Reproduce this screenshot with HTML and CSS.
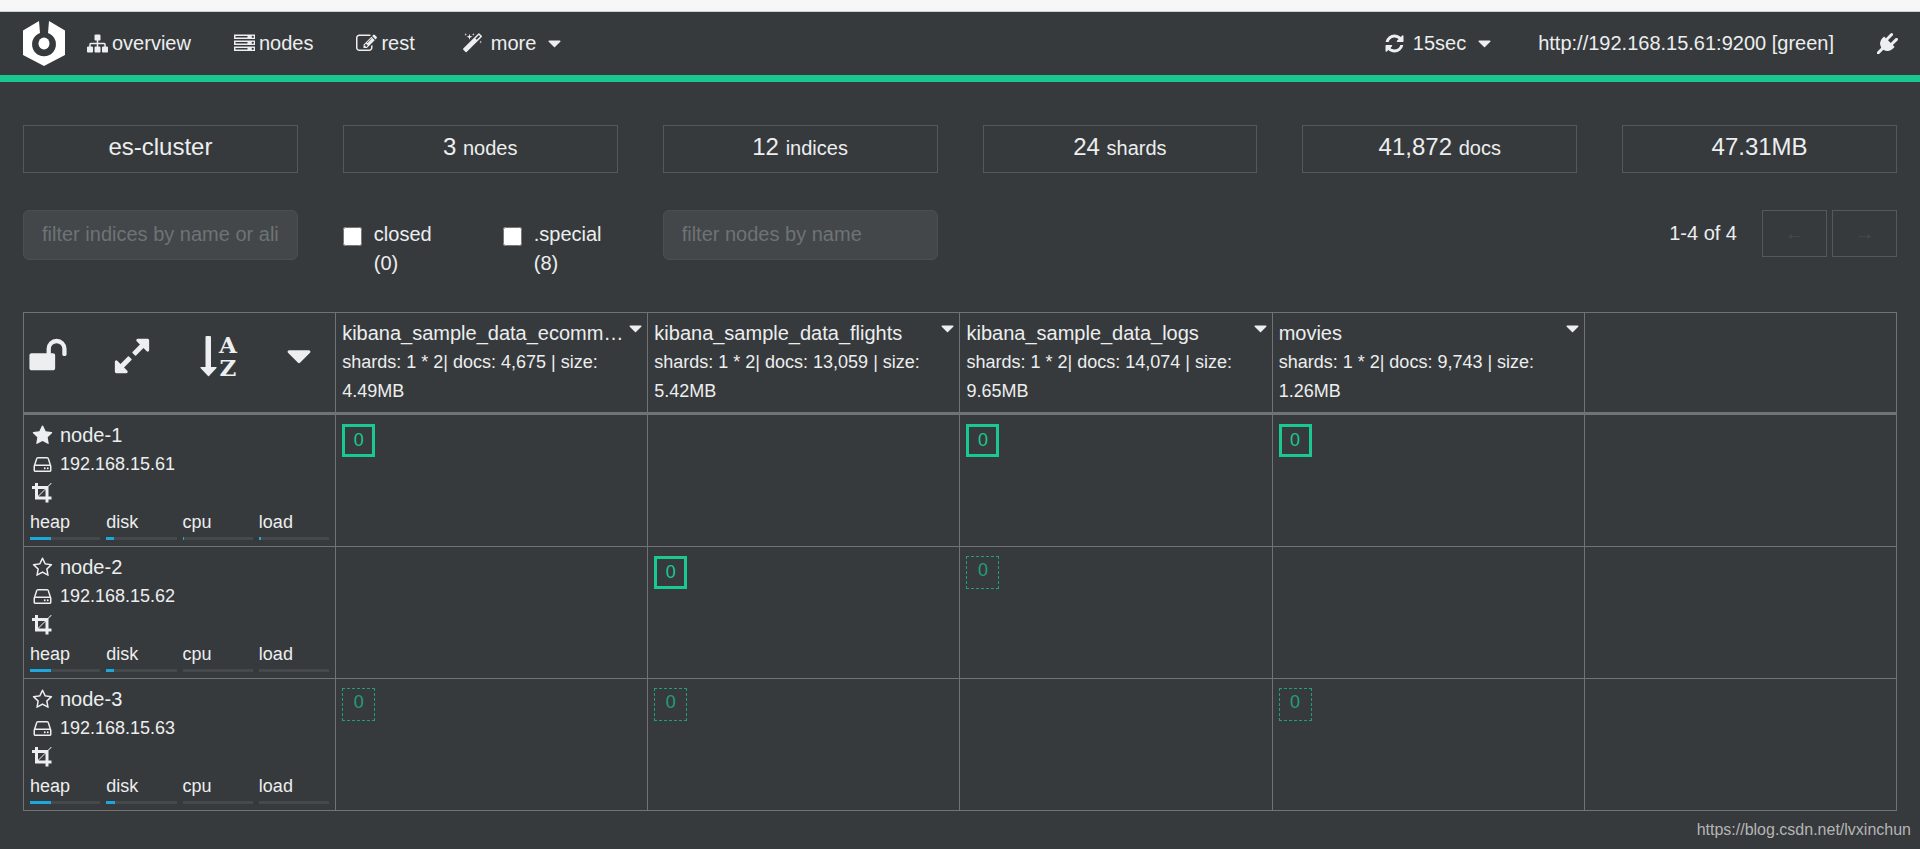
FILE: index.html
```html
<!DOCTYPE html>
<html lang="en">
<head>
<meta charset="utf-8">
<title>cerebro - es-cluster</title>
<meta name="viewport" content="width=device-width, initial-scale=1">
<link rel="stylesheet" href="styles.css">
</head>
<body>
<svg class="sprite" aria-hidden="true">
  <symbol id="caret" viewBox="0 0 1792 1792"><path d="M1408 704q0 26-19 45l-448 448q-19 19-45 19t-45-19l-448-448q-19-19-19-45t19-45 45-19h896q26 0 45 19t19 45z"/></symbol>
  <symbol id="sitemap" viewBox="0 0 1792 1792"><path d="M1792 1248v320q0 40-28 68t-68 28h-320q-40 0-68-28t-28-68v-320q0-40 28-68t68-28h96v-192h-512v192h96q40 0 68 28t28 68v320q0 40-28 68t-68 28h-320q-40 0-68-28t-28-68v-320q0-40 28-68t68-28h96v-192h-512v192h96q40 0 68 28t28 68v320q0 40-28 68t-68 28h-320q-40 0-68-28t-28-68v-320q0-40 28-68t68-28h96v-192q0-52 38-90t90-38h512v-192h-96q-40 0-68-28t-28-68v-320q0-40 28-68t68-28h320q40 0 68 28t28 68v320q0 40-28 68t-68 28h-96v192h512q52 0 90 38t38 90v192h96q40 0 68 28t28 68z"/></symbol>
  <symbol id="server" viewBox="0 0 1792 1792"><path d="M128 1408h1024v-128h-1024v128zm0-512h1024v-128h-1024v128zm1568 448q0-40-28-68t-68-28-68 28-28 68 28 68 68 28 68-28 28-68zm-1568-960h1024v-128h-1024v128zm1568 448q0-40-28-68t-68-28-68 28-28 68 28 68 68 28 68-28 28-68zm0-512q0-40-28-68t-68-28-68 28-28 68 28 68 68 28 68-28 28-68zm96 832v384h-1792v-384h1792zm0-512v384h-1792v-384h1792zm0-512v384h-1792v-384h1792z"/></symbol>
  <symbol id="edit" viewBox="0 0 1792 1792"><path d="M888 1184l116-116-152-152-116 116v56h96v96h56zm440-720q-16-16-33 1l-350 350q-17 17-1 33t33-1l350-350q17-17 1-33zm80 594v190q0 119-84.500 203.500t-203.500 84.500h-832q-119 0-203.500-84.500t-84.500-203.500v-832q0-119 84.500-203.500t203.500-84.500h832q63 0 117 25 15 7 18 23 3 17-9 29l-49 49q-14 14-32 8-23-6-45-6h-832q-66 0-113 47t-47 113v832q0 66 47 113t113 47h832q66 0 113-47t47-113v-126q0-13 9-22l64-64q15-15 35-7t20 29zm-96-738l288 288-672 672h-288v-288zm444 132l-92 92-288-288 92-92q28-28 68-28t68 28l152 152q28 28 28 68t-28 68z"/></symbol>
  <symbol id="magic" viewBox="0 0 1792 1792"><path d="M1254 581l293-293-107-107-293 293zm447-293q0 27-18 45l-1286 1286q-18 18-45 18t-45-18l-198-198q-18-18-18-45t18-45l1286-1286q18-18 45-18t45 18l198 198q18 18 18 45zm-1351-190l98 30-98 30-30 98-30-98-98-30 98-30 30-98zm350 162l196 60-196 60-60 196-60-196-196-60 196-60 60-196zm930 478l98 30-98 30-30 98-30-98-98-30 98-30 30-98zm-640-640l98 30-98 30-30 98-30-98-98-30 98-30 30-98z"/></symbol>
  <symbol id="refresh" viewBox="0 0 1792 1792"><path d="M1639 1056q0 5-1 7-64 268-268 434.500t-478 166.500q-146 0-282.500-55t-243.500-157l-129 129q-19 19-45 19t-45-19-19-45v-448q0-26 19-45t45-19h448q26 0 45 19t19 45-19 45l-137 137q71 66 161 102t187 36q134 0 250-65t186-179q11-17 53-117 8-23 30-23h192q13 0 22.500 9.500t9.500 22.500zm25-800v448q0 26-19 45t-45 19h-448q-26 0-45-19t-19-45 19-45l138-138q-148-137-349-137-134 0-250 65t-186 179q-11 17-53 117-8 23-30 23h-199q-13 0-22.500-9.500t-9.500-22.500v-7q65-268 270-434.500t480-166.500q146 0 284 55.500t245 156.500l130-129q19-19 45-19t45 19 19 45z"/></symbol>
  <symbol id="plug" viewBox="0 0 1792 1792"><path d="M1755 453q37 38 37 90.500t-37 90.500l-401 400 150 150-160 160q-163 163-389.500 186.500t-411.500-100.500l-362 362h-181v-181l362-362q-124-185-100.500-411.500t186.500-389.500l160-160 150 150 400-401q38-37 91-37t90 37 37 90.500-37 90.500l-400 401 234 234 401-400q38-37 91-37t90 37z"/></symbol>
  <symbol id="star" viewBox="0 0 1792 1792"><path d="M1728 647q0 22-26 48l-363 354 86 500q1 7 1 20 0 21-10.500 35.500t-30.500 14.500q-19 0-40-12l-449-236-449 236q-22 12-40 12-21 0-31.500-14.500t-10.500-35.500q0-6 2-20l86-500-364-354q-25-27-25-48 0-37 56-46l502-73 225-455q19-41 49-41t49 41l225 455 502 73q56 9 56 46z"/></symbol>
  <symbol id="star-o" viewBox="0 0 1792 1792"><path d="M1201 1004l306-297-422-62-189-382-189 382-422 62 306 297-73 421 378-199 377 199zm527-357q0 22-26 48l-363 354 86 500q1 7 1 20 0 50-41 50-19 0-40-12l-449-236-449 236q-22 12-40 12-21 0-31.500-14.500t-10.500-35.500q0-6 2-20l86-500-364-354q-25-27-25-48 0-37 56-46l502-73 225-455q19-41 49-41t49 41l225 455 502 73q56 9 56 46z"/></symbol>
  <symbol id="hdd" viewBox="0 0 1792 1792"><path d="M1168 1216q0 33-23.500 56.500t-56.500 23.500-56.500-23.500-23.500-56.500 23.500-56.500 56.500-23.500 56.500 23.500 23.500 56.500zm256 0q0 33-23.500 56.500t-56.500 23.500-56.500-23.500-23.500-56.500 23.500-56.500 56.500-23.500 56.500 23.500 23.500 56.500zm112 160v-320q0-13-9.500-22.500t-22.500-9.500h-1216q-13 0-22.500 9.500t-9.500 22.500v320q0 13 9.500 22.500t22.500 9.500h1216q13 0 22.500-9.500t9.500-22.500zm-1230-480h1180l-157-482q-4-13-16-21.500t-26-8.500h-782q-14 0-26 8.500t-16 21.500zm1358 160v320q0 66-47 113t-113 47h-1216q-66 0-113-47t-47-113v-320q0-25 16-75l197-606q17-53 63-86t101-33h782q55 0 101 33t63 86l197 606q16 50 16 75z"/></symbol>
  <symbol id="crop" viewBox="0 0 1792 1792"><path d="M557 1152h595v-595zm-45-45l595-595h-595v595zm1152 77v192q0 14-9 23t-23 9h-224v224q0 14-9 23t-23 9h-192q-14 0-23-9t-9-23v-224h-864q-14 0-23-9t-9-23v-864h-224q-14 0-23-9t-9-23v-192q0-14 9-23t23-9h224v-224q0-14 9-23t23-9h192q14 0 23 9t9 23v224h851l246-247q10-9 23-9t23 9q9 10 9 23t-9 23l-247 246v851h224q14 0 23 9t9 23z"/></symbol>
  <symbol id="unlock" viewBox="0 0 1792 1792"><path d="M1728 576v256q0 26-19 45t-45 19h-64q-26 0-45-19t-19-45v-256q0-106-75-181t-181-75-181 75-75 181v192h96q40 0 68 28t28 68v576q0 40-28 68t-68 28h-960q-40 0-68-28t-28-68v-576q0-40 28-68t68-28h672v-192q0-185 131.500-316.500t316.500-131.500 316.500 131.500 131.500 316.500z"/></symbol>
  <symbol id="expand" viewBox="0 0 1792 1792"><path d="M883 1056q0 13-10 23l-332 332 144 144q19 19 19 45t-19 45-45 19h-448q-26 0-45-19t-19-45v-448q0-26 19-45t45-19 45 19l144 144 332-332q10-10 23-10t23 10l114 114q10 10 10 23zm781-864v448q0 26-19 45t-45 19-45-19l-144-144-332 332q-10 10-23 10t-23-10l-114-114q-10-10-10-23t10-23l332-332-144-144q-19-19-19-45t19-45 45-19h448q26 0 45 19t19 45z"/></symbol>
</svg>

<div class="window-edge"></div>

<nav class="navbar" aria-label="Main">
  <a class="logo" href="#" aria-label="cerebro">
    <svg viewBox="0 0 42 45"><path d="M16 0 L17 12 A12 12 0 1 0 25 12 L26 0 L42 9.500 V34 L21 45 L0 34 V9.500 Z"/><ellipse cx="21" cy="22.500" rx="5.500" ry="6"/></svg>
  </a>
  <a class="nav-link" href="#"><svg class="icon"><use href="#sitemap"/></svg>overview</a>
  <a class="nav-link" href="#"><svg class="icon"><use href="#server"/></svg>nodes</a>
  <a class="nav-link" href="#"><svg class="icon"><use href="#edit"/></svg>rest</a>
  <button class="nav-link nav-menu" type="button"><svg class="icon"><use href="#magic"/></svg>more<svg class="icon"><use href="#caret"/></svg></button>
  <button class="nav-link nav-menu nav-right" type="button"><svg class="icon"><use href="#refresh"/></svg>15sec<svg class="icon"><use href="#caret"/></svg></button>
  <a class="nav-link" href="#">http://192.168.15.61:9200 [green]</a>
  <button class="nav-link" type="button" aria-label="disconnect"><svg class="icon"><use href="#plug"/></svg></button>
</nav>

<main class="page">
  <section class="columns stats" aria-label="Cluster">
    <div class="stat">es-cluster</div>
    <div class="stat">3 <small>nodes</small></div>
    <div class="stat">12 <small>indices</small></div>
    <div class="stat">24 <small>shards</small></div>
    <div class="stat">41,872 <small>docs</small></div>
    <div class="stat">47.31MB</div>
  </section>

  <form class="columns filters">
    <input class="filter" type="text" placeholder="filter indices by name or aliases" aria-label="filter indices by name or aliases">
    <div class="checks">
      <label class="check"><input type="checkbox"><span>closed (0)</span></label>
      <label class="check"><input type="checkbox"><span>.special (8)</span></label>
    </div>
    <input class="filter" type="text" placeholder="filter nodes by name" aria-label="filter nodes by name">
    <div class="pager">
      <span class="pager-text">1-4 of 4</span>
      <button class="pager-button" type="button" disabled aria-label="previous">←</button>
      <button class="pager-button" type="button" disabled aria-label="next">→</button>
    </div>
  </form>

  <table class="shards">
    <thead>
      <tr>
        <th>
          <div class="tools">
            <button class="tool" type="button" aria-label="unlock"><svg><use href="#unlock"/></svg></button>
            <button class="tool" type="button" aria-label="expand"><svg><use href="#expand"/></svg></button>
            <button class="tool" type="button" aria-label="sort"><svg viewBox="0 0 40 40"><path d="M11 0h4q1 0 1 1v30h5q1 0 .500 1l-7.500 8q-.500.500-1 0l-7.500-8q-.500-1 .500-1h4.500v-30q0-1 1-1z"/><text class="tool-letter" x="33" y="17">A</text><text class="tool-letter" x="33" y="40">Z</text></svg></button>
            <button class="tool" type="button" aria-label="options"><svg><use href="#caret"/></svg></button>
          </div>
        </th>
        <th>
          <div class="index-head"><span class="index-name">kibana_sample_data_ecommerce</span><button class="index-menu" type="button" aria-label="index menu"><svg class="icon"><use href="#caret"/></svg></button></div>
          <div class="index-info">shards: 1 * 2| docs: 4,675 | size: 4.49MB</div>
        </th>
        <th>
          <div class="index-head"><span class="index-name">kibana_sample_data_flights</span><button class="index-menu" type="button" aria-label="index menu"><svg class="icon"><use href="#caret"/></svg></button></div>
          <div class="index-info">shards: 1 * 2| docs: 13,059 | size: 5.42MB</div>
        </th>
        <th>
          <div class="index-head"><span class="index-name">kibana_sample_data_logs</span><button class="index-menu" type="button" aria-label="index menu"><svg class="icon"><use href="#caret"/></svg></button></div>
          <div class="index-info">shards: 1 * 2| docs: 14,074 | size: 9.65MB</div>
        </th>
        <th>
          <div class="index-head"><span class="index-name">movies</span><button class="index-menu" type="button" aria-label="index menu"><svg class="icon"><use href="#caret"/></svg></button></div>
          <div class="index-info">shards: 1 * 2| docs: 9,743 | size: 1.26MB</div>
        </th>
        <th></th>
      </tr>
    </thead>
    <tbody>
      <tr>
        <td>
          <div class="node-line node-name"><svg class="node-icon"><use href="#star"/></svg>node-1</div>
          <div class="node-line"><svg class="node-icon"><use href="#hdd"/></svg>192.168.15.61</div>
          <div class="node-line"><svg class="node-icon"><use href="#crop"/></svg></div>
          <div class="gauges">
            <div>heap<div class="bar"><div class="bar-fill" style="width:30%"></div></div></div>
            <div>disk<div class="bar"><div class="bar-fill" style="width:11%"></div></div></div>
            <div>cpu<div class="bar"><div class="bar-fill" style="width:2%"></div></div></div>
            <div>load<div class="bar"><div class="bar-fill" style="width:3%"></div></div></div>
          </div>
        </td>
        <td><span class="shard primary">0</span></td>
        <td></td>
        <td><span class="shard primary">0</span></td>
        <td><span class="shard primary">0</span></td>
        <td></td>
      </tr>
      <tr>
        <td>
          <div class="node-line node-name"><svg class="node-icon"><use href="#star-o"/></svg>node-2</div>
          <div class="node-line"><svg class="node-icon"><use href="#hdd"/></svg>192.168.15.62</div>
          <div class="node-line"><svg class="node-icon"><use href="#crop"/></svg></div>
          <div class="gauges">
            <div>heap<div class="bar"><div class="bar-fill" style="width:30%"></div></div></div>
            <div>disk<div class="bar"><div class="bar-fill" style="width:11%"></div></div></div>
            <div>cpu<div class="bar"></div></div>
            <div>load<div class="bar"></div></div>
          </div>
        </td>
        <td></td>
        <td><span class="shard primary">0</span></td>
        <td><span class="shard replica">0</span></td>
        <td></td>
        <td></td>
      </tr>
      <tr>
        <td>
          <div class="node-line node-name"><svg class="node-icon"><use href="#star-o"/></svg>node-3</div>
          <div class="node-line"><svg class="node-icon"><use href="#hdd"/></svg>192.168.15.63</div>
          <div class="node-line"><svg class="node-icon"><use href="#crop"/></svg></div>
          <div class="gauges">
            <div>heap<div class="bar"><div class="bar-fill" style="width:30%"></div></div></div>
            <div>disk<div class="bar"><div class="bar-fill" style="width:13%"></div></div></div>
            <div>cpu<div class="bar"></div></div>
            <div>load<div class="bar"></div></div>
          </div>
        </td>
        <td><span class="shard replica">0</span></td>
        <td><span class="shard replica">0</span></td>
        <td></td>
        <td><span class="shard replica">0</span></td>
        <td></td>
      </tr>
    </tbody>
  </table>
</main>

<footer class="source">https://blog.csdn.net/lvxinchun</footer>
</body>
</html>
```

FILE: styles.css
```css
* { box-sizing: border-box; }

body {
  margin: 0;
  background: #373a3c;
  color: #eceeef;
  font-family: "Liberation Sans", Arial, sans-serif;
  font-size: 20px;
  line-height: 29px;
}

button, input { font: inherit; color: inherit; }
button { border: 0; padding: 0; background: none; }
svg { display: block; fill: currentColor; }

.sprite { display: none; }
.icon { width: 21px; height: 21px; flex: none; }

.window-edge {
  height: 12px;
  background: #f7f7f7;
  border-bottom: 1px solid #cfcfcf;
}

/* Navigation */
.navbar {
  display: flex;
  align-items: center;
  gap: 43px;
  height: 70px;
  padding: 0 22px 0 23px;
  border-bottom: 7px solid #1ac98e;
}
.logo { margin-right: -21px; color: #fff; }
.logo svg { width: 42px; height: 45px; }
.nav-link {
  display: flex;
  align-items: center;
  gap: 4px;
  color: inherit;
  text-decoration: none;
}
.nav-menu { gap: 8px; margin-left: 4px; }
.nav-right { margin-left: auto; }

/* Content */
.page { padding: 43px 23px 0; }
.columns {
  display: grid;
  grid-template-columns: repeat(6, minmax(0, 1fr));
  gap: 45px;
}
.stat {
  padding: 1px 0 5px;
  border: 1px solid #55595c;
  font-size: 24px;
  line-height: 40px;
  text-align: center;
}
.stat small { font-size: 20px; line-height: 20px; }

.filters { align-items: start; margin: 37px 0 34px; }
.filter {
  width: 100%;
  height: 50px;
  padding: 0 18px 2px;
  border: 1px solid #4b4f51;
  border-radius: 6px;
  background: #434749;
}
.filter::placeholder { color: #6e7376; opacity: 1; }

.checks {
  display: grid;
  grid-template-columns: 1fr 1fr;
  gap: 45px;
  padding-top: 10px;
}
.check { display: flex; gap: 12px; }
.check input { flex: none; width: 19px; height: 19px; margin: 7px 0 0; }

.pager {
  grid-column: span 3;
  display: flex;
  justify-content: flex-end;
  align-items: center;
  gap: 5px;
}
.pager-text { margin-right: 20px; }
.pager-button {
  width: 65px;
  height: 47px;
  border: 1px solid #55595c;
  color: #46494c;
}

/* Shard table */
.shards {
  width: 100%;
  table-layout: fixed;
  border-collapse: separate;
  border-spacing: 0;
  border-top: 1px solid #6f7376;
  border-left: 1px solid #6f7376;
  font-size: 18px;
}
.shards th, .shards td {
  padding: 6px;
  border-right: 1px solid #6f7376;
  border-bottom: 1px solid #6f7376;
  font-weight: normal;
  text-align: left;
  vertical-align: top;
}
.shards th { border-bottom-width: 3px; }

.tools {
  display: flex;
  justify-content: space-between;
  margin-left: -2px;
  padding: 17px 10px 0 0;
}
.tool svg { width: 40px; height: 40px; overflow: visible; }
.tool-letter {
  font: bold 23px "DejaVu Serif", serif;
  text-anchor: middle;
}

.index-head {
  display: flex;
  justify-content: space-between;
  font-size: 20px;
}
.index-name {
  overflow: hidden;
  text-overflow: ellipsis;
  white-space: nowrap;
}
.index-menu { align-self: flex-start; margin: -1px -5px 0 0; }

.node-line {
  display: flex;
  align-items: center;
  gap: 7px;
  height: 29px;
  padding-left: 2px;
}
.node-name { font-size: 20px; }
.node-icon { width: 21px; height: 21px; }

.gauges {
  display: grid;
  grid-template-columns: repeat(4, 1fr);
  gap: 6px;
}
.bar { height: 3px; background: #46494b; }
.bar-fill { height: 100%; background: #1ca8dd; }

.shard {
  display: block;
  width: 33px;
  height: 33px;
  margin-top: 3px;
  color: #1ac98e;
  line-height: 26px;
  text-align: center;
}
.primary { border: 3px solid #1ac98e; }
.replica { border: 1px dashed #1ac98e; opacity: .7; }

.source {
  padding: 4px 9px 0;
  color: #b4b5b6;
  font-size: 16px;
  text-align: right;
}
```
